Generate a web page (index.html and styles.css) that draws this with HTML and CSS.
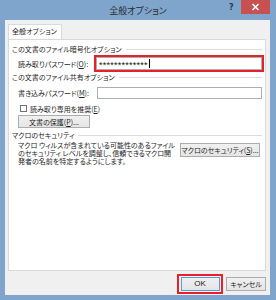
FILE: index.html
```html
<!DOCTYPE html>
<html lang="ja">
<head>
<meta charset="utf-8">
<link rel="stylesheet" href="styles.css">
</head>
<body>
<div class="window">
  <div class="titlebar">
    <div class="title">全般オプション</div>
    <div class="help">?</div>
    <div class="close">
      <svg width="9" height="8" viewBox="0 0 9 8"><path d="M1.5 1 L7.5 7 M7.5 1 L1.5 7" stroke="#fff" stroke-width="1.6" fill="none"/></svg>
    </div>
  </div>
  <div class="client">
    <div class="tabs"><div class="tab">全般オプション</div></div>
    <div class="panel">
      <div class="group-title">この文書のファイル暗号化オプション</div>
      <div class="row row-open">
        <span class="label label-open">読み取りパスワード(<u>O</u>):</span>
        <span class="highlight">
          <span class="input input-pw"><span class="stars">*************</span><span class="caret"></span></span>
        </span>
      </div>
      <div class="group-title">この文書のファイル共有オプション</div>
      <div class="row row-write">
        <span class="label label-write">書き込みパスワード(<u>M</u>):</span>
        <span class="input input-write"></span>
      </div>
      <div class="row row-check">
        <span class="checkbox"></span>
        <span class="check-label">読み取り専用を推奨(<u>E</u>)</span>
      </div>
      <div class="row row-protect">
        <span class="button button-protect">文書の保護(<u>P</u>)...</span>
      </div>
      <div class="group-title group-macro">マクロのセキュリティ</div>
      <div class="row row-macro">
        <div class="macro-text">マクロ ウィルスが含まれている可能性のあるファイル<br>のセキュリティ レベルを調整し、信頼できるマクロ開<br>発者の名前を特定するようにします。</div>
        <span class="button button-macro">マクロのセキュリティ(<u>S</u>)...</span>
      </div>
    </div>
    <div class="footer">
      <span class="highlight highlight-ok"><span class="button button-ok">OK</span></span>
      <span class="button button-cancel">キャンセル</span>
    </div>
  </div>
</div>
</body>
</html>
```

FILE: styles.css
```css
* { box-sizing: border-box; }
html, body { margin: 0; padding: 0; }
body {
  width: 276px;
  height: 300px;
  background: #7fa5cc;
  font-family: "Noto Sans CJK JP", "Noto Sans", sans-serif;
  font-feature-settings: "palt";
  font-size: 7px;
  color: #1e1e1e;
  overflow: hidden;
}
u { text-decoration: underline; text-underline-offset: 1px; }
.window { width: 276px; height: 300px; display: flex; flex-direction: column; }

.titlebar {
  height: 20px;
  display: flex;
  align-items: flex-start;
  position: relative;
}
.title {
  position: absolute;
  left: 0; right: 0; top: 5px;
  text-align: center;
  font-size: 9px;
  line-height: 12px;
  color: #2a2a2a;
}
.help {
  margin-left: 229px;
  margin-top: 3px;
  width: 6px;
  font-family: "DejaVu Sans", sans-serif;
  font-weight: bold;
  font-size: 8px;
  line-height: 10px;
  color: #2a3a4a;
}
.close {
  margin-left: 6px;
  width: 29px;
  height: 14px;
  background: #c75050;
  display: flex;
  align-items: center;
  justify-content: center;
}

.client {
  margin: 0 6px 5px 5px;
  flex: 1;
  background: #f0f0f0;
  padding: 4px 4px 0 3px;
  display: flex;
  flex-direction: column;
}
.tabs { display: flex; height: 15px; }
.tab {
  width: 54px;
  height: 15px;
  border: 1px solid #d9d9d9;
  border-bottom: none;
  background: #fff;
  padding-left: 3px;
  line-height: 13px;
  white-space: nowrap;
  position: relative;
  z-index: 1;
  margin-bottom: -1px;
}
.panel {
  width: 258px;
  height: 232px;
  background: #fff;
  border: 1px solid #d9d9d9;
  display: flex;
  flex-direction: column;
}
.group-title {
  display: flex;
  align-items: center;
  height: 10px;
  line-height: 10px;
  padding-left: 3px;
  padding-right: 3px;
  white-space: nowrap;
}
.group-title:first-child { margin-top: 4px; }
.group-title::after {
  content: "";
  flex: 1;
  border-top: 1px solid #dcdcdc;
  margin-left: 4px;
}
.group-macro { margin-top: 2px; }

.row { display: flex; align-items: center; padding-left: 9px; white-space: nowrap; }
.row-open { margin-top: 1px; height: 17px; }
.label-open { width: 76px; }
.label-write { width: 79px; }
.highlight {
  border: 2px solid #e8202a;
  display: flex;
  align-items: center;
}
.row-open .highlight { width: 170px; height: 17px; }
.input {
  display: flex;
  align-items: center;
  background: #fff;
  border: 1px solid #abadb3;
}
.input-pw { width: 166px; height: 13px; padding-left: 2px; }
.stars {
  font-family: "Liberation Sans", sans-serif;
  font-size: 9px;
  line-height: 9px;
  padding-top: 3px;
  letter-spacing: 0.25px;
  color: #111;
}
.caret { width: 1px; height: 9px; background: #000; margin-left: 1px; }
.row-write { margin-top: 5px; height: 12px; }
.input-write { width: 165px; height: 12px; }
.row-check { margin-top: 6px; height: 7px; }
.checkbox {
  width: 7px; height: 7px;
  border: 1px solid #707070;
  background: #fff;
  margin-left: 2px;
}
.check-label { margin-left: 3px; line-height: 8px; }
.row-protect { margin-top: 3px; }
.button {
  display: flex;
  align-items: center;
  justify-content: center;
  border: 1px solid #acacac;
  background: linear-gradient(#f0f0f0, #e5e5e5);
  white-space: nowrap;
  line-height: 10px;
}
.button-protect { width: 72px; height: 13px; }
.row-macro { margin-top: 1px; align-items: flex-start; }
.macro-text { width: 162px; line-height: 8px; white-space: nowrap; }
.button-macro { width: 80px; height: 14px; margin-top: 2px; }

.footer {
  display: flex;
  justify-content: flex-end;
  align-items: center;
  margin-top: 3px;
}
.highlight-ok { width: 46px; height: 20px; justify-content: center; }
.button-ok { width: 39px; height: 14px; border-color: #5b9bd5; font-family: "Liberation Sans", sans-serif; font-size: 8px; }
.button-cancel { width: 40px; height: 14px; margin-left: 3px; }
```
